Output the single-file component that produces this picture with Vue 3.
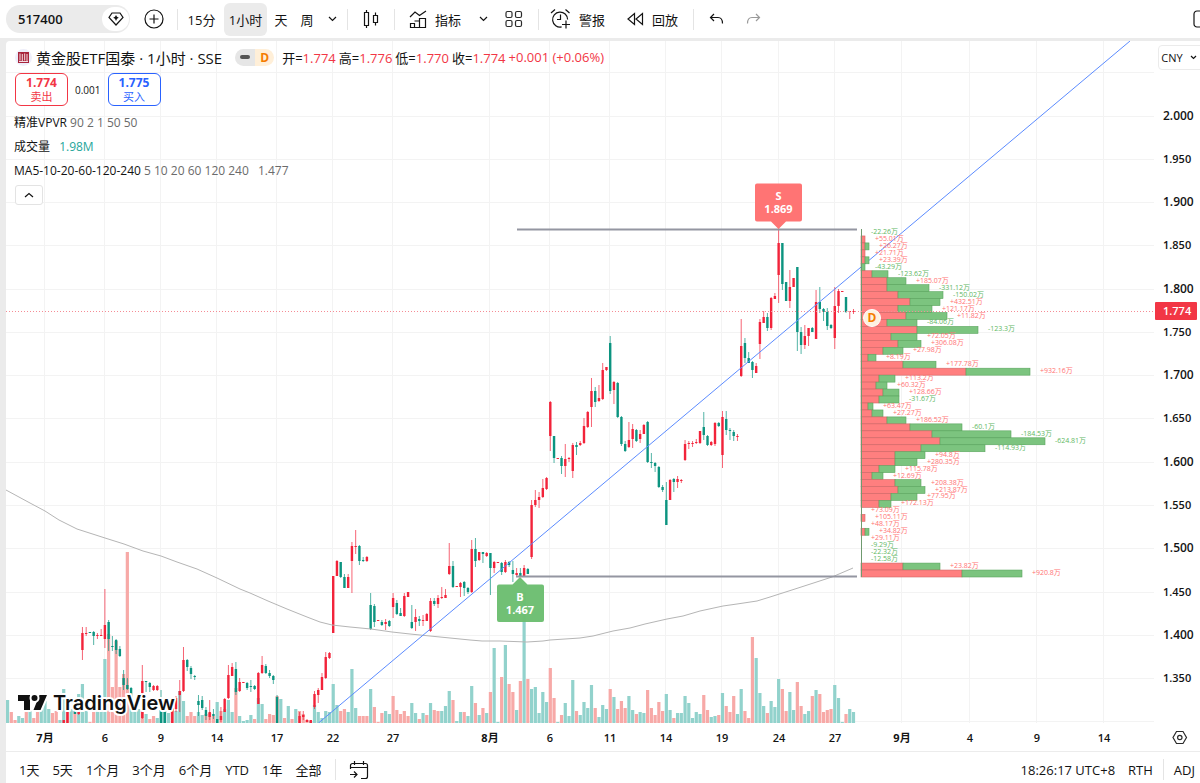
<script setup>
const START = 45
const STEP = 3.743
const BASE = 723
const xAt = (i) => START + STEP * i

const ranges = ['1天', '5天', '1个月', '3个月', '6个月', 'YTD', '1年', '全部']

const days = [
  [0, '7月'], [16, '6'], [31, '9'], [46, '14'], [62, '17'], [77, '22'], [93, '27'], [119, '8月'],
  [135, '6'], [151, '11'], [166, '14'], [181, '19'], [196, '24'], [211, '27'], [229, '9月'],
  [247, '4'], [265, '9'], [283, '14'],
].map(([i, label]) => ({ x: Math.round(xAt(i)), label, strong: label.includes('月') }))

const prices = Array.from({ length: 14 }, (_, k) => ({
  label: (2 - k * 0.05).toFixed(3),
  y: 115.6 + k * 43.27,
  strong: k % 2 === 0,
}))
const rowsY = Array.from({ length: 16 }, (_, k) => Math.round(72.3 + k * 43.27))

// bar index, colour, high, body top, body bottom, low
const candles = `
5r 720 720 723 723|6r 711 711 723 723|8g 711 711 714 714|9r 708 709 714 715|10r 627 633 650 660|11r 627 633 634 636|12g 632 632 633 633|13g 631 632 636 645
14r 633 635 636 639|15r 629 635 636 636|16r 589 625 639 648|17g 620 622 639 651|18g 636 646 647 651|19g 639 640 650 654|20g 646 649 656 657|21g 670 678 685 690
22g 678 685 689 690|23g 687 688 696 697|26r 665 681 718 719|27g 681 681 682 692|28g 682 683 687 692|29r 685 686 690 691|30r 685 686 690 691|31g 690 710 723 723
32g 712 712 723 723|34r 708 708 723 723|35r 696 698 709 712|36r 680 691 695 712|37r 647 660 691 692|38g 659 660 667 671|39g 666 668 674 679|40g 675 676 677 680
41g 695 701 705 716|42g 696 700 708 710|43g 707 710 716 720|44r 700 712 717 720|45g 709 714 716 719|46g 719 719 723 723|47r 707 716 720 722|48r 698 699 712 712
49r 665 675 698 699|50r 663 667 676 676|51g 662 669 692 695|52r 678 682 691 692|53r 682 682 683 683|54g 682 683 688 690|55g 680 686 687 692|56g 685 686 689 690
57r 672 673 704 704|58r 656 665 673 674|59g 664 666 673 674|60g 670 673 676 678|61g 675 676 680 684|62g 695 697 723 723|68r 712 716 723 723|69r 711 715 717 720
70r 719 720 722 722|71r 720 720 723 723|72r 691 694 707 709|73r 688 690 695 703|74r 673 677 690 690|75r 652 657 678 679|76r 652 653 658 659|77r 576 576 633 633
78r 560 561 576 576|79g 562 562 577 578|80g 574 577 588 588|81r 574 577 588 588|82r 542 546 561 593|83r 530 546 547 554|84g 545 546 561 565|85g 557 560 561 562
86r 556 557 561 562|87g 593 605 629 630|88g 604 606 622 627|89r 620 620 621 621|90g 620 622 625 626|91r 619 622 624 630|92g 620 621 626 627|93r 593 598 607 618
94g 600 603 614 615|95g 608 613 616 616|96r 593 596 616 617|97r 592 592 597 597|98g 605 622 628 629|99r 609 617 622 631|100g 616 619 621 626|101r 615 620 621 626
102r 613 614 621 621|103r 598 601 631 632|104g 598 601 604 606|105r 595 598 604 608|106r 587 597 598 599|107r 589 595 598 598|108r 543 566 574 575|109g 561 566 587 588
110r 586 586 587 587|111r 582 583 587 597|112g 581 582 588 596|113g 587 588 592 594|114r 540 549 592 593|115g 538 549 561 567|116r 552 552 560 561|117g 552 552 554 563
118r 552 553 556 557|119g 553 553 568 595|120r 561 562 568 573|121r 562 562 563 563|122g 562 563 572 575|123r 560 562 572 573|124g 561 562 565 567|125g 561 570 574 582
126r 568 573 575 577|127g 568 573 576 577|128r 565 568 577 577|129g 568 569 574 574|130r 500 505 557 559|131r 490 500 505 507|132r 492 497 500 508|133r 479 488 497 498
134r 477 478 489 490|135r 401 402 436 451|136g 436 436 458 463|137r 458 458 459 459|138g 456 458 466 474|139r 444 459 466 477|140r 457 458 459 462|141r 443 445 471 478
142g 442 445 447 455|143r 441 443 445 446|144r 418 426 443 444|145r 411 412 427 428|146r 378 391 407 427|147g 387 391 402 407|148r 385 398 401 402|149r 363 370 399 400
150r 367 367 370 371|151g 336 343 391 394|152r 381 382 390 404|153g 382 383 417 418|154g 416 417 444 446|155g 441 444 451 452|156r 422 440 447 448|157r 424 429 439 448
158g 429 430 441 442|159r 430 434 439 443|160r 424 425 434 434|161g 421 422 462 463|162g 453 462 463 468|163g 462 463 466 472|164g 466 467 487 488|165g 485 487 490 492
166g 482 500 525 525|167r 479 480 500 500|168g 478 479 482 492|169r 476 479 482 488|170r 479 480 481 483|171r 440 444 460 461|172r 441 443 444 449|173r 441 443 444 447
174r 439 442 443 444|175r 431 431 443 444|176g 412 427 435 440|177g 435 436 445 446|178r 441 442 445 446|179r 422 423 444 446|180g 422 423 426 427|181r 411 417 455 468
182g 411 419 430 435|183g 428 430 431 440|184g 430 432 436 441|185r 434 436 437 441|186r 319 346 376 377|187g 338 343 358 363|188g 352 358 363 363|189g 361 362 370 378
190r 363 366 373 373|191r 319 322 344 359|192r 311 317 323 323|193g 313 317 328 331|194r 297 298 328 330|195r 293 296 299 299|196r 228 243 275 303|197g 243 243 284 290
198g 282 282 301 301|199r 270 287 301 308|200r 278 278 287 287|201g 267 267 332 351|202g 327 332 345 354|203r 325 336 345 349|204r 328 328 336 346|205g 327 328 332 332
206r 290 302 339 339|207g 287 302 309 313|208g 308 309 312 321|209g 308 312 326 330|210g 324 325 328 329|211r 287 306 338 349|212r 289 291 306 313|213r 291 291 292 292
214g 297 297 312 313|215r 311 311 312 319|216r 309 311 312 314`
  .trim()
  .split(/[|\n]/)
  .map((row) => {
    const [head, high, top, bottom, low] = row.split(' ')
    return {
      x: xAt(parseInt(head)),
      kind: head.endsWith('r') ? 'rise' : 'fall',
      high: +high,
      top: +top,
      h: Math.max(1, bottom - top),
      low: +low,
    }
  })

const volumes = `g23 g23 r11 r3 g7 g5 r14 g14 r5 r12 g20 g22 g14 r10 r12 g3 g34 r12 g14 r13 g29 g39 g12 r1 r12 g12 g12 g64
r89 r36 r82 r36 r49 r171 g27 g16 g14 r12 g9 r4 r7 g5 g13 g12 g10 r14 g12 g32 g22 r7 r11 r7 g11 g8 r9 r10 r7 g21 r12 g14 g23 g11 r35 g7 g2 g3
g8 r4 g25 g19 r4 r9 r8 r27 g24 r5 g17 r4 g14 r12 r9 r3 g2 g18 g11 g5 g12 g11 g39 g18 r12 r14 g11 g54 g15 r7 r7 r7 g34 r16 r1 r10 g12 g9
r27 r13 r9 r12 r7 g20 g10 r4 g10 r8 g20 r13 r12 g12 g17 g32 r23 g2 g11 r11 g7 g37 r20 g8 r15 g10 r31 g75 g1 r46 g78 r39 r31 g13 r42 g131 r44
g34 g36 g10 g31 g21 r55 r25 g1 r8 g20 g7 g43 r12 g8 g21 g15 g38 r15 g6 g18 g14 r34 g26 r14 r22 r15 g27 g13 r9 g11 g10 r33 r15 r8 r21 r12 g29
g13 r5 g10 g10 g27 g20 g5 g11 g9 r28 r13 g6 g7 r8 g30 r17 r11 r27 g9 g34 r12 r5 r86 g65 g30 g17 r10 g22 g16 g44 r34 r12 g31 g13 r41 r17 g9 g12
r27 g33 r29 r11 r13 r14 g38 g25 g1 r9 g14 g11`
  .trim()
  .split(/\s+/)
  .map((v, k) => ({
    x: xAt(k - 11),
    kind: v[0] === 'r' ? 'rise' : 'fall',
    h: +v.slice(1),
  }))
  .filter((v) => v.x > 5)

// buy width, total width, net volume
const profile = `0 0 -22.26|4 4 +55.01|4 8 +26.27|4 4 +21.71|4 8 +23.39|0 4 -43.29|11 27 -123.62|26 45 +185.07|26 68 -331.12|37 82 -150.02
49 79 +432.51|37 71 +121.17|45 86 +11.82|26 56 -84.06|56 117 -123.3|30 56 +72.05|37 60 +306.08|22 42 +27.98|7 15 +8.19|42 75 +177.78
105 169 +932.16|18 34 +113.2|15 26 +60.32|22 38 +128.66|18 38 -31.67|7 12 +63.47|11 22 +27.27|26 45 +186.52|49 101 -60.1|71 150 -184.53
79 184 -624.81|60 124 -114.93|34 64 +94.8|34 56 +280.35|18 34 +115.78|11 22 +12.69|34 60 +208.38|37 64 +213.87|30 56 +77.95|18 30 +172.13
0 0 +73.09|4 4 +105.11|0 0 +48.17|4 8 +34.82|0 0 +29.11|0 0 -9.29|0 0 -22.32|0 0 -12.58|42 79 +23.82|101 161 +920.8`
  .split(/[|\n]/)
  .map((row, k) => {
    const [buy, total, net] = row.split(' ')
    return { y: 229 + k * 6.96, buy: +buy, total: +total, net: net + '万', up: net[0] === '+' }
  })

const average =
  '6,490 30,503 45,511 59,520 77,529 105,538 124,544 143,551 161,556 177,562 197,569 217,578 240,589 250,593 268,601 287,609 307,617 320,622 332,625 350,627 371,629 392,632 410,634 430,636 450,638 470,640 482,641 500,641 527,642 543,641 550,640 580,638 593,636 613,631 630,628 645,624 667,619 683,616 700,611 723,606 737,604 757,601 770,597 795,589 832,577 853,568'
</script>

<template>
  <div class="app">
    <header class="topbar">
      <div class="symbol">
        <button class="symbol-name">517400</button>
        <button class="gem" aria-label="数据">
          <svg width="16" height="14" viewBox="0 0 16 14"><path d="M4 1h8l3 4.500-7 7.500-7-7.500z" class="ln" /><path d="M8 3l1 1.800 1.800 1L9 6.800 8 9 7 6.800l-1.800-1L7 4.800z" class="solid" /></svg>
        </button>
      </div>
      <button class="tool plus" aria-label="添加">
        <svg width="20" height="20" viewBox="0 0 20 20"><circle cx="10" cy="10" r="9" class="ln" /><path d="M10 5.500v9M5.500 10h9" class="ln" /></svg>
      </button>
      <i class="sep"></i>
      <nav class="intervals">
        <button>15分</button>
        <button class="active">1小时</button>
        <button class="short">天</button>
        <button class="short">周</button>
        <button class="short" aria-label="更多周期"><svg width="9" height="6" viewBox="0 0 9 6"><path d="M1 1l3.500 3.500L8 1" class="ln" /></svg></button>
      </nav>
      <i class="sep"></i>
      <button class="tool candle" aria-label="K线图">
        <svg width="16" height="20" viewBox="0 0 16 20"><path d="M1.500 3.500h4v13h-4zM3.500 1v2.500M3.500 16.500V19M10.500 6.500h4v7h-4zM12.500 3.500v3M12.500 13.500v3" class="ln" /></svg>
      </button>
      <i class="sep"></i>
      <button class="tool labelled first">
        <svg width="18" height="19" viewBox="0 0 18 19"><path d="M1 7l5-5 4.500 3.500L17 1M1.500 13.500h4v4h-4zM5.500 11h5v6.500h-5M10.500 8.500h6v9h-6z" class="ln" /></svg>
        指标
      </button>
      <button class="tool more" aria-label="指标模板"><svg width="9" height="6" viewBox="0 0 9 6"><path d="M1 1l3.500 3.500L8 1" class="ln" /></svg></button>
      <button class="tool layout" aria-label="布局">
        <svg width="18" height="18" viewBox="0 0 18 18" class="grid-icon"><rect x="1" y="1.500" width="6" height="6" rx="1.500" /><rect x="10.500" y="1.500" width="6" height="6" rx="1.500" /><rect x="1" y="10.500" width="6" height="6" rx="1.500" /><rect x="10.500" y="10.500" width="6" height="6" rx="1.500" /></svg>
      </button>
      <i class="sep"></i>
      <button class="tool labelled alarm">
        <svg width="22" height="22" viewBox="0 0 22 22"><path d="M17.600 11.500a7.500 7.500 0 1 0-6 7.400M10.500 6.500v5H7M1 5l4-3.500M15.500 1.500l4 3.500M16 12.500v8M12 16.500h8" class="ln" /></svg>
        警报
      </button>
      <button class="tool labelled">
        <svg width="17" height="14" viewBox="0 0 17 14"><path d="M7.500 1.500v11L1 7zM15.500 1.500v11L9 7z" class="ln" /></svg>
        回放
      </button>
      <i class="sep"></i>
      <button class="tool undo" aria-label="撤消"><svg width="15" height="12" viewBox="0 0 15 12"><path d="M5 1L1.500 4.500 5 8M1.500 4.500H9c3 0 4.500 2.500 4.500 6" class="ln" /></svg></button>
      <button class="tool undo muted" aria-label="重做"><svg width="15" height="12" viewBox="0 0 15 12"><path d="M10 1l3.500 3.500L10 8M13.500 4.500H6C3 4.500 1.500 7 1.500 10.500" class="ln" /></svg></button>
      <button class="tool edge" aria-label="面板"><svg width="17" height="18" viewBox="0 0 17 18"><rect x="1" y="1" width="15" height="16" rx="3" class="ln" /></svg></button>
    </header>

    <main class="panel">
      <section class="chart">
        <svg class="plot" viewBox="6 41 1194 710" role="img" aria-label="黄金股ETF国泰 1小时 K线图">
          <defs>
            <clipPath id="pane"><rect x="6" y="41" width="1149" height="682" /></clipPath>
          </defs>
          <g class="grid">
            <line v-for="d in days" :key="'d' + d.x" :x1="d.x - 0.5" :x2="d.x - 0.5" y1="41" y2="723" />
            <line v-for="y in rowsY" :key="'r' + y" x1="6" x2="1154" :y1="y + 0.5" :y2="y + 0.5" />
          </g>
          <g clip-path="url(#pane)">
            <rect v-for="(v, k) in volumes" :key="'v' + k" :class="['vol', v.kind]" :x="v.x - 1.600" :y="BASE - v.h" width="3.200" :height="v.h" />
            <g v-for="(c, k) in candles" :key="'c' + k" :class="['bar', c.kind]">
              <rect class="wick" :x="c.x - 0.500" :y="c.high" width="1" :height="Math.max(0, c.low - c.high)" />
              <rect :x="c.x - 1.200" :y="c.top" width="2.400" :height="c.h" />
            </g>
            <polyline class="average" :points="average" />
            <line class="trend" x1="318.500" y1="723" x2="1130" y2="41" />
            <path class="level" d="M517 229.500h340M516 576.500h341" />
            <g v-for="(p, k) in profile" :key="'p' + k">
              <rect class="buy" x="861" :y="p.y" :width="p.buy" height="6.960" />
              <rect class="sell" :x="861 + p.buy" :y="p.y" :width="p.total - p.buy" height="6.960" />
            </g>
            <line class="spine" x1="861.500" x2="861.500" y1="229" y2="577" />
            <text v-for="(p, k) in profile" :key="'t' + k" :class="['net', p.up ? 'up' : 'down']" :x="871 + p.total" :y="p.y + 5">{{ p.net }}</text>
            <line class="last" x1="6" x2="1155" y1="311.500" y2="311.500" />
          </g>
          <path class="tag-s" d="M757 183.500h43a2 2 0 0 1 2 2v34a2 2 0 0 1-2 2h-14l-7.500 7.500-7.500-7.500h-14a2 2 0 0 1-2-2v-34a2 2 0 0 1 2-2z" />
          <text class="tag" x="778.500" y="200">S</text>
          <text class="tag" x="778.500" y="213">1.869</text>
          <path class="tag-b" d="M499 584.500h13.500l7.500-7.500 7.500 7.500H542a2 2 0 0 1 2 2V620a2 2 0 0 1-2 2h-43a2 2 0 0 1-2-2v-33.500a2 2 0 0 1 2-2z" />
          <text class="tag" x="520" y="601">B</text>
          <text class="tag" x="520" y="614">1.467</text>
          <circle class="event" cx="872" cy="318" r="8.500" />
          <text class="event-letter" x="872" y="322">D</text>

          <g class="brand">
            <path d="M18 695h12v15h-6v-9h-6zM39.500 695h7.500l-6.500 15h-7z" />
            <circle cx="34.500" cy="698" r="3" />
            <text x="53" y="710">TradingView</text>
          </g>

          <text v-for="p in prices" :key="p.label" :class="['price', { strong: p.strong }]" x="1163" :y="p.y + 4">{{ p.label }}</text>
          <rect class="last-box" x="1155" y="302" width="42" height="18" rx="1" />
          <text class="price last-text" x="1163" y="315">1.774</text>
          <text v-for="d in days" :key="'l' + d.x" :class="['day', { strong: d.strong }]" :x="d.x" y="742">{{ d.label }}</text>
          <g class="settings"><path d="M1176.500 731.500h6.500l3.500 6-3.500 6h-6.500l-3.500-6z" /><circle cx="1179.800" cy="737.500" r="2.200" /></g>
        </svg>

        <div class="legend">
          <div class="title">
            <svg class="logo" width="17" height="17" viewBox="0 0 17 17"><circle cx="8.500" cy="8.500" r="8.500" fill="#eeeefa" /><rect x="3" y="3" width="11" height="11" fill="#a8243c" /><path d="M5 4.500v7M7.300 5v7M9.700 4.500v7M12 5v7M4 12.500h9" stroke="#f4dfe4" stroke-width="1" /></svg>
            <h1>黄金股ETF国泰 · 1小时 · SSE</h1>
            <span class="status"><i><b></b></i><em>D</em></span>
            <span class="ohlc">开=<q>1.774</q></span>
            <span class="ohlc">高=<q>1.776</q></span>
            <span class="ohlc">低=<q>1.770</q></span>
            <span class="ohlc">收=<q>1.774</q></span>
            <span class="ohlc"><q>+0.001 (+0.06%)</q></span>
          </div>
          <div class="orders">
            <button class="order sell-btn"><b>1.774</b>卖出</button>
            <span>0.001</span>
            <button class="order buy-btn"><b>1.775</b>买入</button>
          </div>
          <p>精准<strong>VPVR</strong> <span>90 2 1 50 50</span></p>
          <p>成交量 <span class="teal">1.98M</span></p>
          <p><strong>MA5-10-20-60-120-240</strong> <span>5 10 20 60 120 240</span> <span class="value">1.477</span></p>
          <button class="collapse" aria-label="收起"><svg width="10" height="6" viewBox="0 0 10 6"><path d="M1 5l4-3.500L9 5" class="ln" /></svg></button>
        </div>
        <button class="currency">CNY <svg width="7" height="5" viewBox="0 0 7 5"><path d="M1 1l2.500 2.500L6 1" class="ln" /></svg></button>
      </section>

      <footer class="bottombar">
        <button v-for="r in ranges" :key="r">{{ r }}</button>
        <i class="sep"></i>
        <button class="goto" aria-label="前往日期">
          <svg width="20" height="20" viewBox="0 0 20 20"><path d="M1.500 9V5.500a2 2 0 0 1 2-2h13a2 2 0 0 1 2 2v11a2 2 0 0 1-2 2H12M1.500 7.500h17M5.500 1v4M14.500 1v4M1 14.500h6.500M5 11.500l3 3-3 3" class="ln" /></svg>
        </button>
        <div class="session">
          <button class="clock">18:26:17 UTC+8</button>
          <button>RTH</button>
          <i class="sep"></i>
          <button>ADJ</button>
        </div>
      </footer>
    </main>
  </div>
</template>

<style>
body {
  overflow: hidden;
  background: #ebebeb;
}
</style>

<style scoped>
.app {
  min-height: 100vh;
  display: flex;
  flex-direction: column;
  color: #131313;
  font-family: "Open Sans", "Noto Sans CJK SC", sans-serif;
  font-size: 13px;
}
button {
  border: 0;
  padding: 0;
  margin: 0;
  background: none;
  color: inherit;
  font: inherit;
  white-space: nowrap;
  display: flex;
  align-items: center;
  justify-content: center;
  flex: none;
}
.ln {
  fill: none;
  stroke: currentColor;
  stroke-width: 1.2;
}
.solid {
  fill: currentColor;
}
.sep {
  width: 1px;
  height: 21px;
  background: #e4e4e4;
  flex: none;
}
.topbar {
  height: 38px;
  display: flex;
  align-items: center;
  background: #fff;
  overflow: hidden;
}
.symbol {
  width: 112px;
  height: 28px;
  margin-left: 6px;
  padding-left: 12px;
  border-radius: 14px;
  background: #ebebeb;
  display: flex;
  align-items: center;
  justify-content: space-between;
  flex: none;
}
.symbol-name {
  font-weight: 600;
}
.gem {
  width: 27px;
  height: 24px;
  margin-right: 1px;
  border-radius: 12px;
  background: #fff;
}
.plus {
  width: 36px;
  margin: 0 5px 0 6px;
}
.intervals {
  display: flex;
  gap: 1px;
  margin: 0 3px 0 2px;
}
.intervals button {
  width: 43px;
  height: 33px;
  border-radius: 6px;
}
.intervals .active {
  background: #ebebeb;
}
.intervals .short {
  width: 26px;
}
.intervals .short + .short {
  width: 24px;
}
.candle {
  width: 46px;
}
.labelled {
  gap: 8px;
  margin-right: 15px;
}
.labelled svg {
  flex: none;
}
.first {
  margin: 0 0 0 14px;
}
.more {
  width: 44px;
}
.layout {
  width: 18px;
  margin-right: 15px;
}
.grid-icon {
  fill: none;
  stroke: #2a2a2a;
  stroke-width: 1.2;
}
.alarm {
  gap: 7px;
  margin: 0 22px 0 11px;
}
.undo {
  width: 37px;
}
.sep + .undo {
  margin-left: 4px;
}
.muted {
  color: #9a9a9a;
}
.edge {
  margin-left: auto;
  margin-right: -10px;
}
.panel {
  flex: 1;
  display: flex;
  flex-direction: column;
  margin: 3px 0 0 6px;
  border-radius: 4px 0 0 0;
  background: #fff;
  overflow: hidden;
}
.chart {
  position: relative;
}
.plot {
  display: block;
  width: 100%;
}
.grid line {
  stroke: #f3f3f3;
}
.vol.rise {
  fill: #f7a9a7;
}
.vol.fall {
  fill: #92d2cc;
}
.bar.rise {
  fill: #f2233a;
}
.bar.fall {
  fill: #0c9480;
}
.wick {
  opacity: 0.7;
}
.average {
  fill: none;
  stroke: #b5b5b5;
}
.trend {
  stroke: #5b8bff;
}
.level {
  stroke: #9496a1;
  stroke-width: 2;
}
.buy,
.sell {
  stroke-width: 0.6;
}
.buy {
  fill: #ff7f7f;
  stroke: #cf6565;
}
.sell {
  fill: #7cc47f;
  stroke: #5aa55e;
}
.spine {
  stroke: #6f9a6f;
}
.net {
  font-size: 7px;
}
.net.up {
  fill: #ff7373;
}
.net.down {
  fill: #5fb863;
}
.last {
  stroke: #f58c95;
  stroke-dasharray: 1 2;
}
.tag-s {
  fill: #ff7474;
}
.tag-b {
  fill: #6bbd6f;
  fill-opacity: 0.96;
}
.tag {
  fill: #fff;
  font-size: 11px;
  font-weight: 700;
  text-anchor: middle;
}
.event {
  fill: #fdf1e0;
  stroke: #fff;
}
.event-letter {
  fill: #f57c00;
  font-size: 12px;
  font-weight: 700;
  text-anchor: middle;
}
.brand {
  fill: #111;
  stroke: #fff;
  stroke-width: 4;
  stroke-linejoin: round;
  paint-order: stroke;
}
.brand text {
  font-family: Inter, sans-serif;
  font-size: 20px;
  font-weight: 600;
}
.price {
  fill: #131313;
  font-size: 11px;
  font-weight: 600;
}
.price.strong {
  font-size: 12px;
}
.last-box {
  fill: #f23645;
}
.price.last-text {
  fill: #fff;
}
.day {
  fill: #131313;
  font-size: 11px;
  font-weight: 600;
  text-anchor: middle;
}
.day.strong {
  font-weight: 700;
}
.settings {
  fill: none;
  stroke: #2a2a2a;
  stroke-width: 1.2;
}
.legend {
  position: absolute;
  top: 6px;
  left: 8px;
}
.title {
  display: flex;
  align-items: center;
  height: 20px;
}
.logo {
  margin: 0 4px 0 1px;
}
h1 {
  margin: 0;
  font-size: 15px;
  font-weight: 400;
  white-space: nowrap;
}
.status {
  display: flex;
  height: 17px;
  margin: 0 8px 0 13px;
  border-radius: 9px;
  overflow: hidden;
}
.status i {
  width: 20px;
  background: #e6e6e6;
  display: flex;
  align-items: center;
  justify-content: center;
}
.status b {
  width: 10px;
  height: 4px;
  border-radius: 2px;
  background: #555;
}
.status em {
  width: 19px;
  background: #ffefd8;
  color: #f57c00;
  font-size: 12px;
  font-weight: 700;
  font-style: normal;
  line-height: 17px;
  text-align: center;
}
.ohlc {
  margin-right: 3px;
  font-size: 13px;
  white-space: nowrap;
}
.ohlc q {
  color: #f23645;
  quotes: none;
}
.orders {
  display: flex;
  align-items: center;
  gap: 7px;
  margin: 6px 0 5px 1px;
  font-size: 10px;
}
.order {
  width: 53px;
  height: 33px;
  flex-direction: column;
  border: 1px solid currentColor;
  border-radius: 6px;
  background: #fff;
  font-size: 11px;
  line-height: 14px;
}
.order b {
  font-size: 12px;
  line-height: 14px;
}
.sell-btn {
  color: #f23645;
}
.buy-btn {
  color: #2962ff;
}
.legend p {
  margin: 0;
  height: 24px;
  line-height: 24px;
  font-size: 12px;
}
.legend p span {
  color: #6b6b6b;
}
.legend p .teal {
  margin-left: 6px;
  color: #26a69a;
}
.legend strong {
  font-weight: 500;
}
.legend .value {
  margin-left: 6px;
}
.collapse {
  width: 28px;
  height: 20px;
  margin: 2px 0 0 1px;
  border: 1px solid #e3e3e3;
  border-radius: 3px;
  background: #fff;
}
.currency {
  position: absolute;
  top: 4px;
  right: -4px;
  width: 46px;
  height: 25px;
  gap: 7px;
  padding-right: 4px;
  border: 1px solid #ebebeb;
  border-radius: 4px;
  background: #fff;
  font-size: 11px;
}
.bottombar {
  flex: 1;
  min-height: 26px;
  display: flex;
  align-items: center;
  gap: 13px;
  padding: 4px 5px 0 13px;
  border-top: 1px solid #ececec;
}
.session {
  display: flex;
  align-items: center;
  gap: 10px;
  margin-left: auto;
}
.clock {
  margin-right: 3px;
}
</style>
